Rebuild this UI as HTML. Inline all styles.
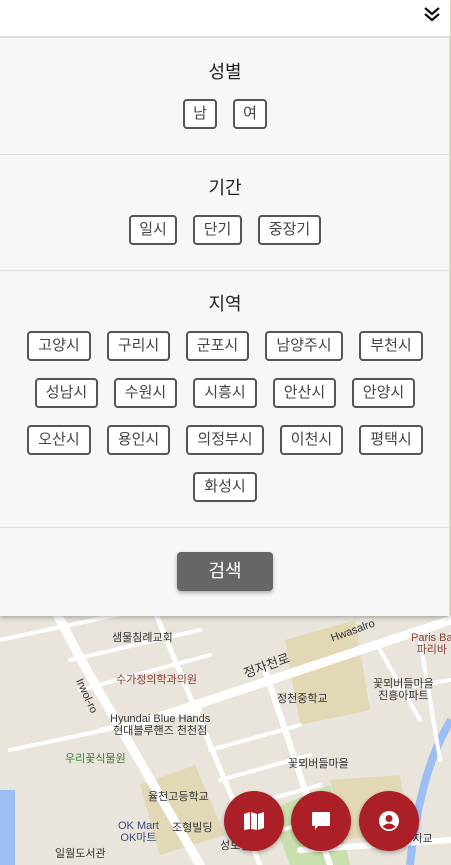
<!DOCTYPE html>
<html><head><meta charset="utf-8"><style>
*{margin:0;padding:0;box-sizing:border-box}
body{width:451px;height:865px;overflow:hidden;position:relative;font-family:"Liberation Sans","Noto Sans CJK KR",sans-serif;background:#e9e5dc}
#map{position:absolute;left:0;top:600px;width:451px;height:265px;overflow:hidden;background:#e9e5dc}
.lbl{position:absolute;font-size:11px;white-space:nowrap;color:#333;text-align:center;line-height:12px}
#panel{position:absolute;left:0;top:0;width:450px;height:616px;background:#f7f7f7;border-right:1px solid #ddd;box-shadow:0 2px 4px rgba(0,0,0,.25)}
#top{position:absolute;left:0;top:0;width:450px;height:38px;background:#fff;border-bottom:2px solid #ddd}
.sep{position:absolute;left:0;width:450px;height:1px;background:#ddd}
.h{position:absolute;left:0;width:450px;text-align:center;font-size:18px;color:#222}
.b{position:absolute;height:30px;border:2px solid #555;border-radius:4px;background:#fff;font-size:15px;color:#444;text-align:center;line-height:26px}
#search{position:absolute;left:177px;top:552px;width:96px;height:39px;background:#666;border-radius:4px;color:#fff;font-size:18px;text-align:center;line-height:39px;box-shadow:0 2px 4px rgba(0,0,0,.3)}
.fab{position:absolute;top:791px;width:60px;height:60px;border-radius:50%;background:#ab2026;box-shadow:0 2px 4px rgba(0,0,0,.3)}
.fab svg{position:absolute;left:18px;top:18px}
</style></head><body>
<div id="map">
<svg width="451" height="265" style="position:absolute;left:0;top:0">
<polygon points="140,185 195,165 225,235 160,255" fill="#e2d8b6"/>
<polygon points="285,40 355,20 370,110 300,125" fill="#e2d8b6"/>
<polygon points="270,210 330,185 350,265 290,265" fill="#c9dfae"/>
<polygon points="330,180 400,175 410,230 345,240" fill="#e2d8b6"/>
<rect x="0" y="190" width="15" height="75" fill="#9cbef2"/>
<path d="M451,120 Q420,170 410,265" stroke="#9cbef2" stroke-width="8" fill="none"/>
<g stroke="#fff" fill="none" stroke-linecap="round">
<path d="M50,0 Q80,60 110,110 L200,265" stroke-width="9"/>
<path d="M120,130 L451,20" stroke-width="9"/>
<path d="M265,70 L330,265" stroke-width="6"/>
<path d="M150,0 L260,265" stroke-width="5"/>
<path d="M0,40 L140,10" stroke-width="4"/>
<path d="M10,150 L200,110" stroke-width="4"/>
<path d="M70,60 L200,30 M80,90 L210,55 M100,130 L140,120" stroke-width="4"/>
<path d="M210,150 L300,125 M220,180 L310,155 M230,210 L320,185 M250,240 L330,215" stroke-width="4"/>
<path d="M380,50 L420,120 M390,90 L450,80 M420,40 L440,160" stroke-width="4"/>
<path d="M300,250 L451,240" stroke-width="6"/>
</g>
</svg>
<div class="lbl" style="left:112px;top:32px">샘물침례교회</div>
<div class="lbl" style="left:116px;top:74px;color:#8a3c36">수가정의학과의원</div>
<div class="lbl" style="left:110px;top:113px">Hyundai Blue Hands<br>현대블루핸즈 천천점</div>
<div class="lbl" style="left:65px;top:153px;color:#3d7a3b">우리꽃식물원</div>
<div class="lbl" style="left:148px;top:191px">율천고등학교</div>
<div class="lbl" style="left:172px;top:222px">조형빌딩</div>
<div class="lbl" style="left:118px;top:220px;color:#3b4a7a">OK Mart<br>OK마트</div>
<div class="lbl" style="left:220px;top:240px">성보빌딩</div>
<div class="lbl" style="left:55px;top:248px">일월도서관</div>
<div class="lbl" style="left:277px;top:93px">정천중학교</div>
<div class="lbl" style="left:288px;top:158px">꽃뫼버들마을</div>
<div class="lbl" style="left:373px;top:78px">꽃뫼버들마을<br>진흥아파트</div>
<div class="lbl" style="left:411px;top:32px;color:#8a3c36">Paris Ba<br>파리바</div>
<div class="lbl" style="left:382px;top:233px">꽃뫼양지교</div>
<div class="lbl" style="left:330px;top:25px;transform:rotate(-20deg)">Hwasalro</div>
<div class="lbl" style="left:243px;top:60px;transform:rotate(-20deg);font-size:13px">정자천로</div>
<div class="lbl" style="left:68px;top:90px;transform:rotate(65deg)">Irwol-ro</div>
</div>

<div id="panel">
<div id="top"><svg width="20" height="20" style="position:absolute;left:422px;top:4px" viewBox="0 0 20 20"><path d="M3,4 L10,10 L17,4 M3,10 L10,16 L17,10" stroke="#111" stroke-width="2.2" fill="none"/></svg></div>
<div class="h" style="top:58px">성별</div>
<div class="b" style="left:183px;top:99px;width:34px">남</div>
<div class="b" style="left:233px;top:99px;width:34px">여</div>
<div class="sep" style="top:154px"></div>
<div class="h" style="top:174px">기간</div>
<div class="b" style="left:129px;top:215px;width:48px">일시</div>
<div class="b" style="left:193px;top:215px;width:49px">단기</div>
<div class="b" style="left:258px;top:215px;width:63px">중장기</div>
<div class="sep" style="top:270px"></div>
<div class="h" style="top:290px">지역</div>
<div class="b" style="left:27px;top:331px;width:64px">고양시</div>
<div class="b" style="left:107px;top:331px;width:63px">구리시</div>
<div class="b" style="left:186px;top:331px;width:63px">군포시</div>
<div class="b" style="left:265px;top:331px;width:78px">남양주시</div>
<div class="b" style="left:359px;top:331px;width:64px">부천시</div>
<div class="b" style="left:35px;top:378px;width:63px">성남시</div>
<div class="b" style="left:114px;top:378px;width:63px">수원시</div>
<div class="b" style="left:193px;top:378px;width:64px">시흥시</div>
<div class="b" style="left:273px;top:378px;width:63px">안산시</div>
<div class="b" style="left:352px;top:378px;width:63px">안양시</div>
<div class="b" style="left:27px;top:425px;width:64px">오산시</div>
<div class="b" style="left:107px;top:425px;width:63px">용인시</div>
<div class="b" style="left:186px;top:425px;width:78px">의정부시</div>
<div class="b" style="left:280px;top:425px;width:63px">이천시</div>
<div class="b" style="left:359px;top:425px;width:64px">평택시</div>
<div class="b" style="left:193px;top:472px;width:64px">화성시</div>
<div class="sep" style="top:527px"></div>
<div id="search">검색</div>
</div>

<div class="fab" style="left:224px"><svg width="24" height="24" viewBox="0 0 24 24"><path d="M2,5 L8,3 L8,20 L2,21 Z M9,3 L15,5 L15,21 L9,20 Z M16,5 L22,3 L22,19 L16,21 Z" fill="#fff"/></svg></div>
<div class="fab" style="left:291px"><svg width="24" height="24" viewBox="0 0 24 24"><path d="M4,3 H20 A1,1 0 0 1 21,4 V16 A1,1 0 0 1 20,17 H9 L6,21 V17 H4 A1,1 0 0 1 3,16 V4 A1,1 0 0 1 4,3 Z" fill="#fff"/></svg></div>
<div class="fab" style="left:359px"><svg width="24" height="24" viewBox="0 0 24 24"><circle cx="12" cy="12" r="10" fill="#fff"/><circle cx="12" cy="9.5" r="3.5" fill="#ab2026"/><path d="M5.5,17.5 Q12,11.5 18.5,17.5 Q12,23 5.5,17.5 Z" fill="#ab2026"/></svg></div>
</body></html>
